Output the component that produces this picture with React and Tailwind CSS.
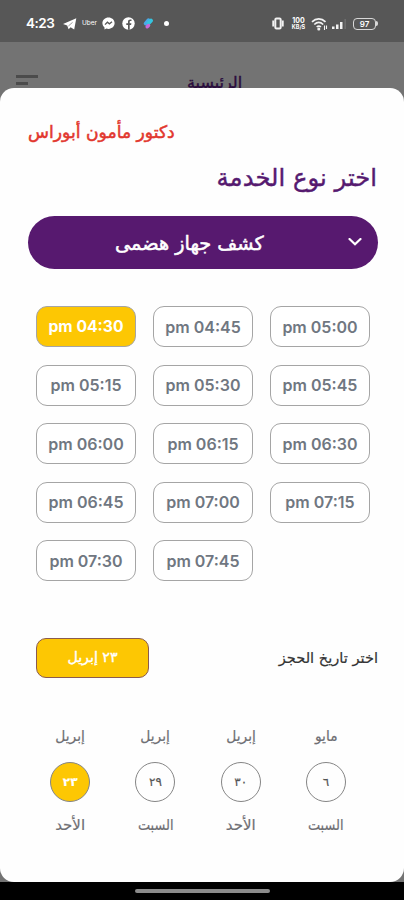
import React from "react";

const ARABIC = "font-['DejaVu_Sans',sans-serif]";

const slots = [
  "04:30", "04:45", "05:00",
  "05:15", "05:30", "05:45",
  "06:00", "06:15", "06:30",
  "06:45", "07:00", "07:15",
  "07:30", "07:45",
];

const days = [
  { month: "إبريل", day: "٢٣", name: "الأحد", active: true },
  { month: "إبريل", day: "٢٩", name: "السبت", narrow: true },
  { month: "إبريل", day: "٣٠", name: "الأحد" },
  { month: "مايو", day: "٦", name: "السبت", narrow: true },
];

function StatusBar() {
  return (
    <div className="flex h-[42px] items-center bg-[#575757] pt-[5px] pl-[26px] pr-[26px] text-white">
      <span className="w-[28px] whitespace-nowrap font-['Inter',sans-serif] text-[13.5px] font-semibold tracking-[-0.5px]">4:23</span>
      <svg className="ml-[9px]" width="14" height="12" viewBox="0 0 14 12" fill="#fff">
        <path d="M0 6 13.300.300 11.200 11.600 7.600 9.300 5.600 11.300 4.200 7.500z" />
        <path d="M5.400 8 9.600 4.300" stroke="#575757" strokeWidth=".6" />
      </svg>
      <span className="ml-[5px] w-[14px] font-['Inter',sans-serif] text-[6.500px] leading-none">Uber</span>
      <svg className="ml-[6px]" width="13" height="13" viewBox="0 0 13 13">
        <path d="M6.500.400C3 .400.400 2.900.400 6.100c0 1.900.800 3.400 2.100 4.400v2.100l1.900-1c.700.200 1.300.300 2.100.300 3.500 0 6.100-2.500 6.100-5.800S10 .400 6.500.400z" fill="#fff" />
        <path d="M3 7.600 5.400 5.200l2 1.600L10 4.800" fill="none" stroke="#575757" strokeWidth="1.300" />
      </svg>
      <svg className="ml-[7px]" width="13" height="13" viewBox="0 0 13 13">
        <circle cx="6.500" cy="6.500" r="6.200" fill="#fff" />
        <path d="M6 12.700V8H4.300V6.200H6V4.800c0-1.600.900-2.400 2.400-2.400h1.100V4h-.800c-.700 0-1 .300-1 1v1.200h1.700L9.100 8H7.700v4.700z" fill="#575757" />
      </svg>
      <svg className="ml-[8px]" width="11" height="13" viewBox="0 0 11 13" strokeLinecap="round">
        <path d="M2.800 6.500 5.500 3.300" stroke="#4aa9e8" strokeWidth="4" />
        <path d="M5.600 6 8 3.600" stroke="#35c4df" strokeWidth="4" />
        <path d="M4.200 9.700 5.500 8.500" stroke="#c76adb" strokeWidth="3.500" />
      </svg>
      <span className="ml-[10px] size-[5px] rounded-full bg-white" />
      <span className="flex-1" />
      <svg width="12" height="13" viewBox="0 0 12 13" fill="none" stroke="#f2f2f2">
        <rect x="3.300" y="1.500" width="5.400" height="10" rx="1.200" strokeWidth="2" />
        <path d="M1.200 3.500v6M10.800 3.500v6" strokeWidth="1.800" />
      </svg>
      <span className="ml-[6px] flex w-[17px] flex-col items-center font-['Inter',sans-serif] text-[7px] leading-[7px] font-bold">
        <span className="leading-[7px]">100</span>
        <span className="text-[5.500px] leading-[7px]">KB/S</span>
      </span>
      <svg className="ml-[4px]" width="18" height="14" viewBox="0 0 18 14" fill="none" stroke="#f2f2f2" strokeWidth="1.700">
        <path d="M1 4.800C5 .800 10.500.800 14.500 4.800M3.300 7.500c2.700-2.600 6.200-2.600 8.900 0M5.700 10c1.400-1.300 2.800-1.300 4.200 0" />
        <circle cx="7.800" cy="12" r=".7" fill="#f2f2f2" />
        <path d="M13.500 8.500v4.500M15.500 8.500V12" strokeWidth="1.100" />
      </svg>
      <svg className="ml-[3px]" width="15" height="12" viewBox="0 0 15 12">
        <path d="M0 8.500h2.500V11H0zM4 6.500h2.500V11H4zM8 4h2.500v7H8z" fill="#f2f2f2" />
        <path d="M12.500 1h1.300V11h-1.300z" fill="#737373" />
      </svg>
      <span className="ml-[6px] flex h-[12px] w-[23px] items-center justify-center rounded-[4px] border-[1.500px] border-[#d8d8d8] font-['Inter',sans-serif] text-[8px] leading-none font-semibold">97</span>
      <span className="h-[5px] w-[2px] rounded-r bg-[#d8d8d8]" />
    </div>
  );
}

function TopBar() {
  return (
    <div className="flex h-[46px] items-start justify-between px-4">
      <div className="flex w-[171px] flex-col gap-[4px] pt-[33px]">
        <span className="h-[3px] w-[22px] bg-[#4b4b4b]" />
        <span className="h-[3px] w-[12px] bg-[#4b4b4b]" />
      </div>
      <span dir="rtl" className={`flex-1 pt-[28px] text-left text-[16px] leading-[26px] text-[#2a0c3d] [-webkit-text-stroke:0.4px_#2a0c3d] ${ARABIC}`}>
        الرئيسية
      </span>
    </div>
  );
}

function Slot({ time, active }) {
  const tone = active ? "bg-[#fdc703] text-white font-bold text-[15.7px]" : "bg-white text-[#707781] font-semibold text-[16px]";
  return (
    <button className={`flex h-[41px] items-center justify-center rounded-[11px] border border-[#a5a5a5] font-['Inter',sans-serif] whitespace-nowrap ${tone}`}>
      pm {time}
    </button>
  );
}

function Day({ month, day, name, active, narrow }) {
  const tone = active ? "bg-[#fdc703] text-white font-bold" : "text-[#555]";
  return (
    <div dir="rtl" className={`flex w-[85.300px] flex-col items-center text-[15px] leading-6 text-[#6f6f74] [-webkit-text-stroke:0.2px] ${ARABIC}`}>
      <span className="scale-x-92">{month}</span>
      <span className={`mt-[14px] flex size-[40px] items-center justify-center rounded-full border border-[#858585] text-[12px] ${tone}`}>{day}</span>
      <span className={narrow ? "mt-[11px] scale-x-86" : "mt-[11px]"}>{name}</span>
    </div>
  );
}

export default function App() {
  return (
    <div className="flex h-[900px] w-[404px] flex-col overflow-hidden bg-[#737373]">
      <StatusBar />
      <TopBar />
      <main className="relative flex h-[794px] flex-col rounded-[14px] bg-[#fefefe]">
        <h2 dir="rtl" className={`mt-[30px] ml-[28px] self-start text-[17.2px] leading-7 text-[#e2372e] [-webkit-text-stroke:0.5px_#e2372e] ${ARABIC}`}>
          دكتور مأمون أبوراس
        </h2>
        <h1 dir="rtl" className={`mt-[14px] mr-[27px] self-end text-[24.3px] leading-9 text-[#561a70] [-webkit-text-stroke:0.4px_#561a70] ${ARABIC}`}>
          اختر نوع الخدمة
        </h1>
        <button className="mt-[20px] ml-[28px] flex h-[53px] w-[350px] items-center rounded-full bg-[#57196f] pr-[16px] text-white">
          <span dir="rtl" className={`ml-[87px] pt-[3px] text-left text-[19.3px] [-webkit-text-stroke:0.5px_#fff] ${ARABIC}`}>
            كشف جهاز هضمى
          </span>
          <svg className="ml-auto" width="14" height="9" viewBox="0 0 14 9" fill="none" stroke="#fff" strokeWidth="2.200" strokeLinecap="round">
            <path d="m1.500 1 5.500 5.300 5.500-5.300" />
          </svg>
        </button>
        <div className="mt-[37px] ml-[36px] grid grid-cols-[100px_100px_100px] gap-x-[17px] gap-y-[17.500px]">
          {slots.map((time, i) => (
            <Slot key={time} time={time} active={i === 0} />
          ))}
        </div>
        <div className="mt-[57px] flex items-center justify-between pr-[26px] pl-[36px]">
          <button dir="rtl" className={`flex h-[40px] w-[113px] items-center justify-center rounded-[10px] border border-[#8a5b50] bg-[#fdc703] text-[14.2px] text-white [-webkit-text-stroke:0.4px_#fff] ${ARABIC}`}>
            ٢٣ إبريل
          </button>
          <span dir="rtl" className={`text-[14.6px] text-[#333] [-webkit-text-stroke:0.2px_#333] ${ARABIC}`}>
            اختر تاريخ الحجز
          </span>
        </div>
        <div className="mt-[46px] ml-[27.500px] flex">
          {days.map((d, i) => (
            <Day key={i} {...d} />
          ))}
        </div>
      </main>
      <footer className="flex h-[18px] items-center justify-center bg-black">
        <span className="h-[4px] w-[135px] rounded-full bg-[#8b8b8b]" />
      </footer>
    </div>
  );
}
